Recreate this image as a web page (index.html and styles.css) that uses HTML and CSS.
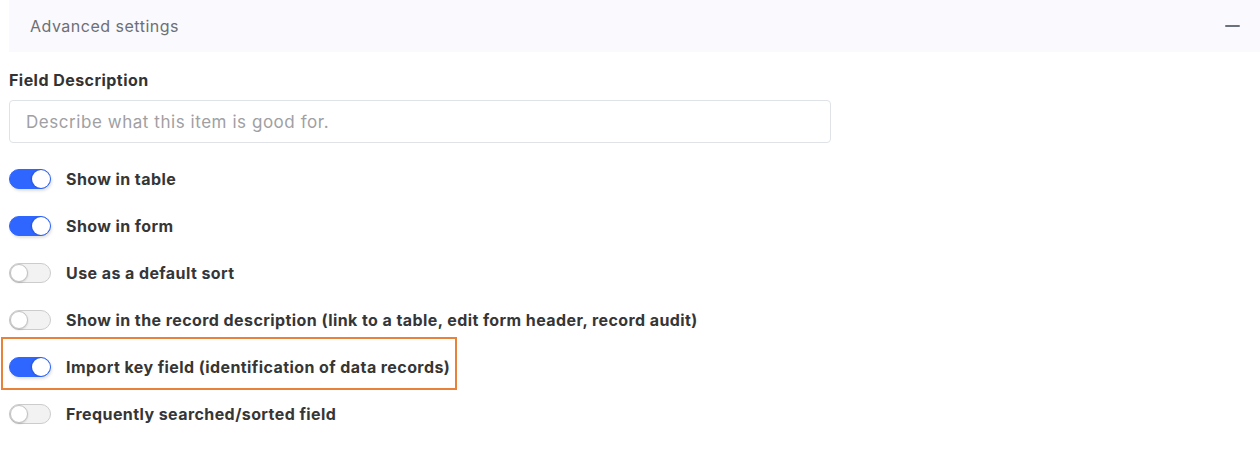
FILE: index.html
```html
<!DOCTYPE html>
<html>
<head>
<meta charset="utf-8">
<link rel="stylesheet" href="styles.css">
</head>
<body>
<div class="page">
  <div class="panel-head">
    <span class="panel-title">Advanced settings</span>
    <span class="collapse-icon"></span>
  </div>
  <div class="field-label">Field Description</div>
  <div class="text-input">Describe what this item is good for.</div>
  <div class="options">
    <div class="option"><span class="toggle on"><span class="knob"></span></span><span class="option-text">Show in table</span></div>
    <div class="option"><span class="toggle on"><span class="knob"></span></span><span class="option-text">Show in form</span></div>
    <div class="option"><span class="toggle"><span class="knob"></span></span><span class="option-text">Use as a default sort</span></div>
    <div class="option"><span class="toggle"><span class="knob"></span></span><span class="option-text">Show in the record description (link to a table, edit form header, record audit)</span></div>
    <div class="option highlighted"><span class="toggle on"><span class="knob"></span></span><span class="option-text">Import key field (identification of data records)</span></div>
    <div class="option"><span class="toggle"><span class="knob"></span></span><span class="option-text">Frequently searched/sorted field</span></div>
  </div>
</div>
</body>
</html>
```
FILE: styles.css
```css
html, body {
  margin: 0;
  padding: 0;
  background: #ffffff;
}
body {
  font-family: Inter, "Noto Sans", sans-serif;
  color: #363636;
}
.page {
  padding-left: 9px;
  display: flex;
  flex-direction: column;
  align-items: flex-start;
}
.panel-head {
  align-self: stretch;
  height: 52px;
  background: #f9f9fe;
  display: flex;
  align-items: center;
  justify-content: space-between;
  padding: 0 20px 0 21px;
  box-sizing: border-box;
}
.panel-title {
  font-size: 16px;
  letter-spacing: 0.5px;
  color: #6d6f75;
}
.collapse-icon {
  width: 15px;
  height: 2px;
  background: #6b717b;
  border-radius: 1px;
}
.field-label {
  margin-top: 18px;
  font-size: 16px;
  letter-spacing: 0.45px;
  font-weight: 700;
  color: #333333;
  line-height: 20px;
}
.text-input {
  margin-top: 10px;
  width: 822px;
  height: 43px;
  box-sizing: border-box;
  border: 1px solid #dfe2e6;
  border-radius: 4px;
  padding: 0 16px;
  display: flex;
  align-items: center;
  font-size: 17px;
  letter-spacing: 0.55px;
  color: #a0a0a4;
}
.options {
  margin-top: 12px;
  display: flex;
  flex-direction: column;
  align-items: flex-start;
}
.option {
  position: relative;
  height: 47px;
  display: inline-flex;
  align-items: center;
  gap: 15px;
}
.option-text {
  font-size: 16px;
  letter-spacing: 0.42px;
  font-weight: 700;
  color: #363636;
}
.highlighted::after {
  content: "";
  position: absolute;
  left: -8px;
  right: -7px;
  top: -6px;
  bottom: 0;
  border: 2px solid #e8823a;
  pointer-events: none;
}
.toggle {
  position: relative;
  width: 42px;
  height: 20px;
  border-radius: 10px;
  box-sizing: border-box;
  background: #f2f2f2;
  border: 1px solid #cccccc;
  display: flex;
  align-items: center;
  padding: 0 1px;
}
.toggle .knob {
  width: 18px;
  height: 18px;
  border-radius: 50%;
  background: #ffffff;
  box-sizing: border-box;
  border: 1px solid #c2c2c2;
  box-shadow: 0 1px 2px rgba(0, 0, 0, 0.15);
  margin-left: -1px;
}
.toggle.on {
  background: #2f66ff;
  border-color: #2f66ff;
  justify-content: flex-end;
  box-shadow: 1px 2px 3px rgba(0, 0, 0, 0.12);
}
.toggle.on .knob {
  border: none;
  margin-left: 0;
  margin-right: -1px;
  box-shadow: -1px 0 2px rgba(0, 0, 0, 0.2);
}
```
